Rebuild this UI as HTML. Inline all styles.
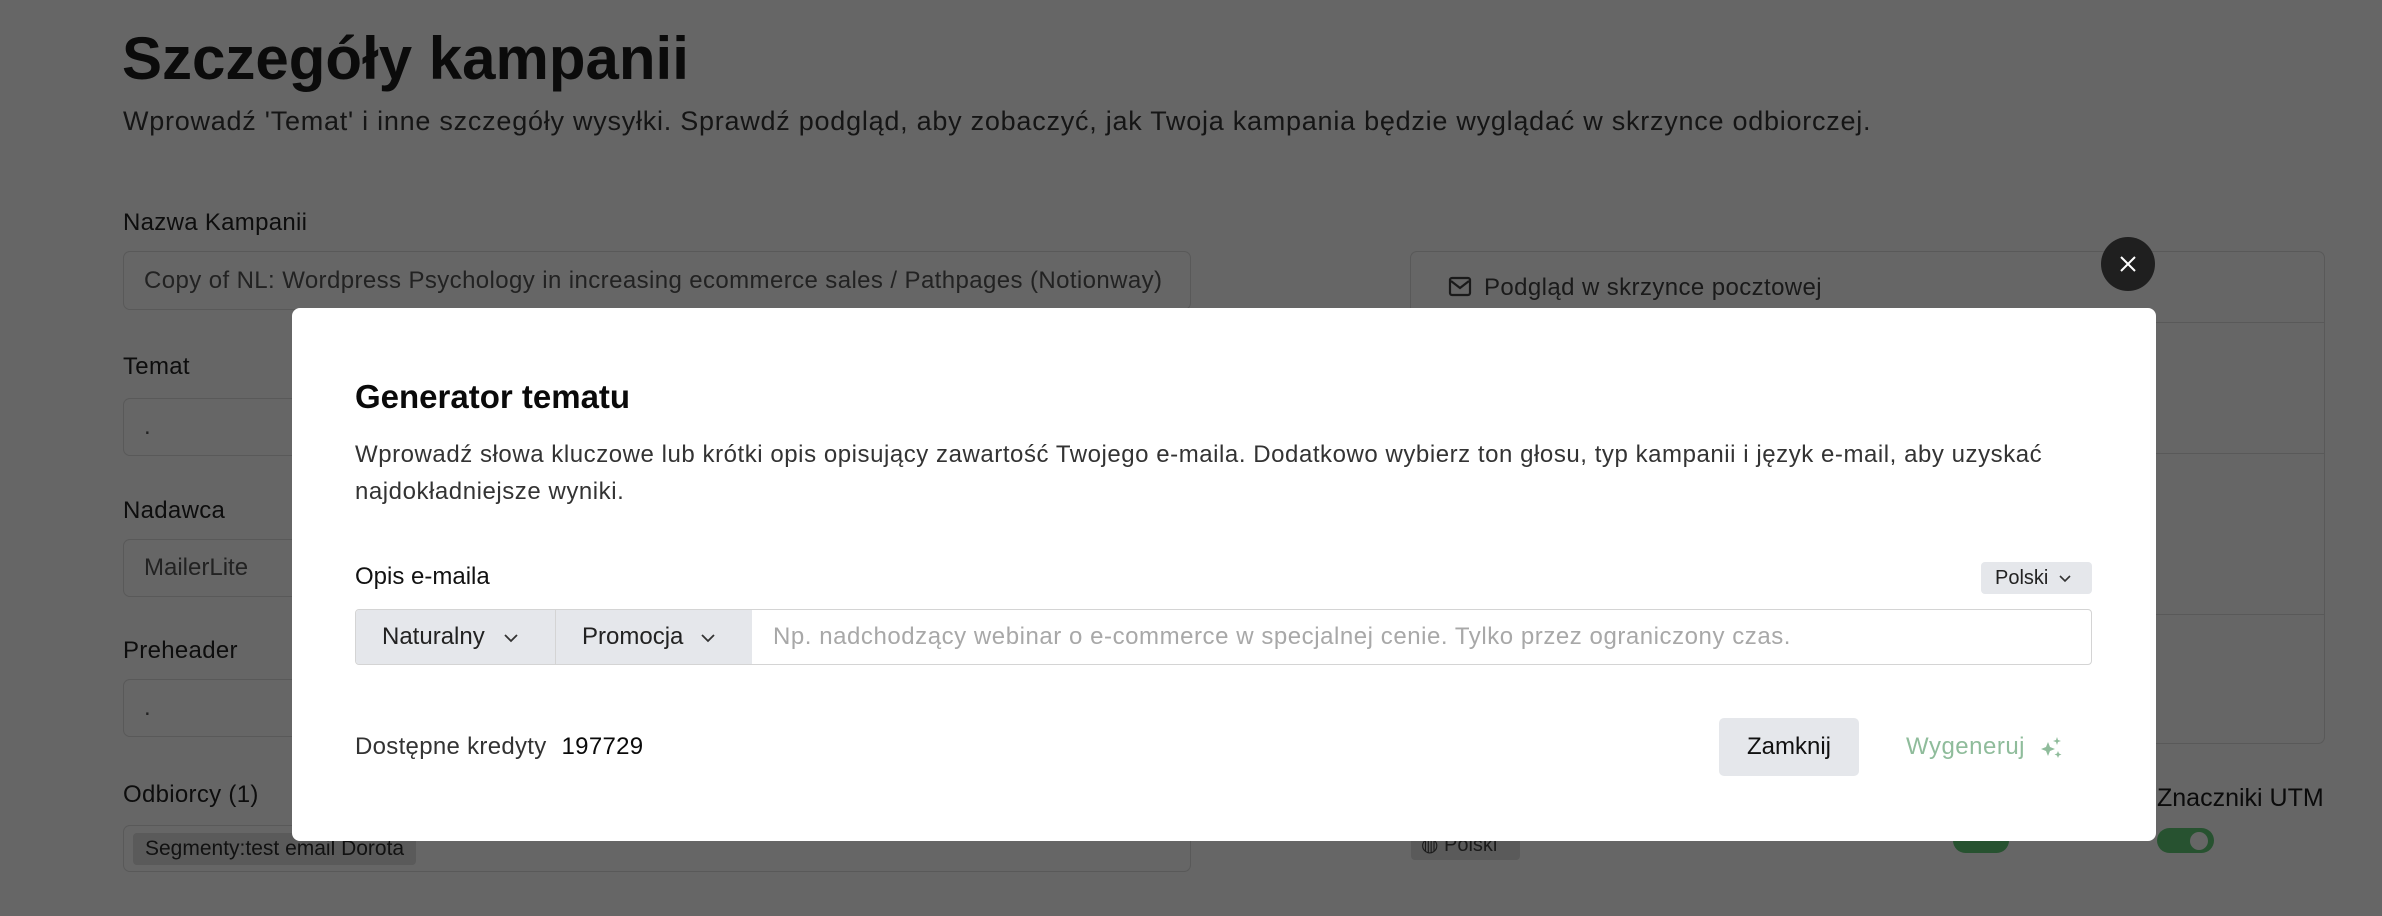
<!DOCTYPE html>
<html><head><meta charset="utf-8"><style>
*{box-sizing:border-box;margin:0;padding:0}
body{width:2382px;height:916px;overflow:hidden;background:#666;font-family:"Liberation Sans",sans-serif;position:relative;color:#0b0b0b}
.a{position:absolute;white-space:nowrap}
.lbl{font-size:24px;color:#0d0d0d;letter-spacing:0.3px}
.inp{position:absolute;left:123px;width:1068px;border:1.5px solid #595959;border-radius:7px;font-size:24px;color:#222;padding-left:20px;display:flex;align-items:center}
.modal{position:absolute;left:292px;top:308px;width:1864px;height:533px;background:#fff;border-radius:8px}
.gray{background:#e5e7eb}
</style></head><body>
<div class="a" style="left:122px;top:24px;font-size:60px;font-weight:bold;letter-spacing:0px">Szczegóły kampanii</div>
<div class="a" style="left:123px;top:106px;font-size:27px;color:#151515;letter-spacing:0.75px">Wprowadź 'Temat' i inne szczegóły wysyłki. Sprawdź podgląd, aby zobaczyć, jak Twoja kampania będzie wyglądać w skrzynce odbiorczej.</div>

<div class="a lbl" style="left:123px;top:209px">Nazwa Kampanii</div>
<div class="inp" style="top:251px;height:59px;letter-spacing:0.4px">Copy of NL: Wordpress Psychology in increasing ecommerce sales / Pathpages (Notionway)</div>
<div class="a lbl" style="left:123px;top:353px">Temat</div>
<div class="inp" style="top:398px;height:58px">.</div>
<div class="a lbl" style="left:123px;top:497px">Nadawca</div>
<div class="inp" style="top:539px;height:58px">MailerLite</div>
<div class="a lbl" style="left:123px;top:637px">Preheader</div>
<div class="inp" style="top:679px;height:58px">.</div>
<div class="a lbl" style="left:123px;top:781px">Odbiorcy (1)</div>
<div class="inp" style="top:825px;height:47px;padding-left:9px"><span style="background:#5a5a5a;padding:4px 12px;font-size:21px;color:#111;border-radius:4px">Segmenty:test email Dorota</span></div>

<div class="a" style="left:1410px;top:251px;width:915px;height:493px;border:1.5px solid #595959;border-radius:7px"></div>
<div class="a" style="left:1411px;top:322px;width:913px;border-top:1.5px solid #595959"></div>
<div class="a" style="left:1411px;top:453px;width:913px;border-top:1.5px solid #595959"></div>
<div class="a" style="left:1411px;top:614px;width:913px;border-top:1.5px solid #595959"></div>
<svg class="a" style="left:1448px;top:276px" width="24" height="22" viewBox="0 0 24 22"><rect x="2" y="2" width="20" height="17" rx="2" fill="none" stroke="#1a1a1a" stroke-width="2.2"/><path d="M3 5l9 7 9-7" fill="none" stroke="#1a1a1a" stroke-width="2.2"/></svg>
<div class="a" style="left:1484px;top:274px;font-size:24px;color:#1a1a1a;letter-spacing:0.4px">Podgląd w skrzynce pocztowej</div>
<div class="a" style="left:2101px;top:237px;width:54px;height:54px;border-radius:50%;background:#1f1f1f"></div>
<svg class="a" style="left:2118px;top:254px" width="20" height="20"><path d="M3 3l14 14M17 3L3 17" stroke="#fff" stroke-width="2"/></svg>

<div class="a" style="left:1411px;top:829px;width:109px;height:31px;background:#5a5a5a;border-radius:4px;font-size:20px;padding:3px 10px;color:#1a1a1a">◍ Polski</div>
<div class="a" style="left:2157px;top:784px;font-size:25px;color:#0b0b0b">Znaczniki UTM</div>
<div class="a" style="left:1953px;top:828px;width:56px;height:25px;border-radius:13px;background:#275230"></div>
<div class="a" style="left:2157px;top:828px;width:57px;height:25px;border-radius:13px;background:#275230"></div>
<div class="a" style="left:2190px;top:832px;width:18px;height:18px;border-radius:50%;background:#666"></div>

<div class="modal">
 <div class="a" style="left:63px;top:70px;font-size:33px;font-weight:bold;color:#0a0a0a">Generator tematu</div>
 <div class="a" style="left:63px;top:128px;font-size:24px;color:#333;line-height:37px;white-space:normal;width:1790px;letter-spacing:0.55px">Wprowadź słowa kluczowe lub krótki opis opisujący zawartość Twojego e-maila. Dodatkowo wybierz ton głosu, typ kampanii i język e-mail, aby uzyskać najdokładniejsze wyniki.</div>
 <div class="a" style="left:63px;top:255px;font-size:24px;color:#111">Opis e-maila</div>
 <div class="a gray" style="left:1689px;top:254px;width:111px;height:32px;border-radius:4px;font-size:20px;color:#222;padding:5px 0 0 14px">Polski <svg width="14" height="10" style="margin-left:4px"><path d="M2 2l5 5 5-5" fill="none" stroke="#333" stroke-width="1.6"/></svg></div>
 <div class="a" style="left:63px;top:301px;width:1737px;height:56px;border:1.5px solid #d4d4d4;border-radius:4px;overflow:hidden">
  <div class="a gray" style="left:0;top:0;width:200px;height:56px;border-right:1px solid #d4d4d4;font-size:24px;color:#222;padding:13px 0 0 26px">Naturalny <svg width="16" height="12" style="margin-left:12px"><path d="M2 3l6 6 6-6" fill="none" stroke="#333" stroke-width="1.8"/></svg></div>
  <div class="a gray" style="left:200px;top:0;width:196px;height:56px;font-size:24px;color:#222;padding:13px 0 0 26px">Promocja <svg width="16" height="12" style="margin-left:10px"><path d="M2 3l6 6 6-6" fill="none" stroke="#333" stroke-width="1.8"/></svg></div>
  <div class="a" style="left:417px;top:13px;font-size:24px;color:#a8a8a8;letter-spacing:0.55px">Np. nadchodzący webinar o e-commerce w specjalnej cenie. Tylko przez ograniczony czas.</div>
 </div>
 <div class="a" style="left:63px;top:425px;font-size:24px;color:#333;letter-spacing:0.3px">Dostępne kredyty <span style="color:#0a0a0a;margin-left:8px">197729</span></div>
 <div class="a gray" style="left:1427px;top:410px;width:140px;height:58px;border-radius:5px;font-size:24px;color:#111;text-align:center;line-height:58px">Zamknij</div>
 <div class="a" style="left:1614px;top:425px;font-size:24px;color:#8fbc9b;letter-spacing:0.5px">Wygeneruj</div>
 <svg class="a" style="left:1748px;top:428px" width="24" height="24" viewBox="0 0 24 24"><path d="M8 6l2 5 5 2-5 2-2 5-2-5-5-2 5-2z" fill="#8fbc9b"/><path d="M17 1l1 3 3 1-3 1-1 3-1-3-3-1 3-1z" fill="#8fbc9b"/><path d="M18 15l1 2.5 2.5 1-2.5 1-1 2.5-1-2.5-2.5-1 2.5-1z" fill="#8fbc9b"/></svg>
</div>
</body></html>
